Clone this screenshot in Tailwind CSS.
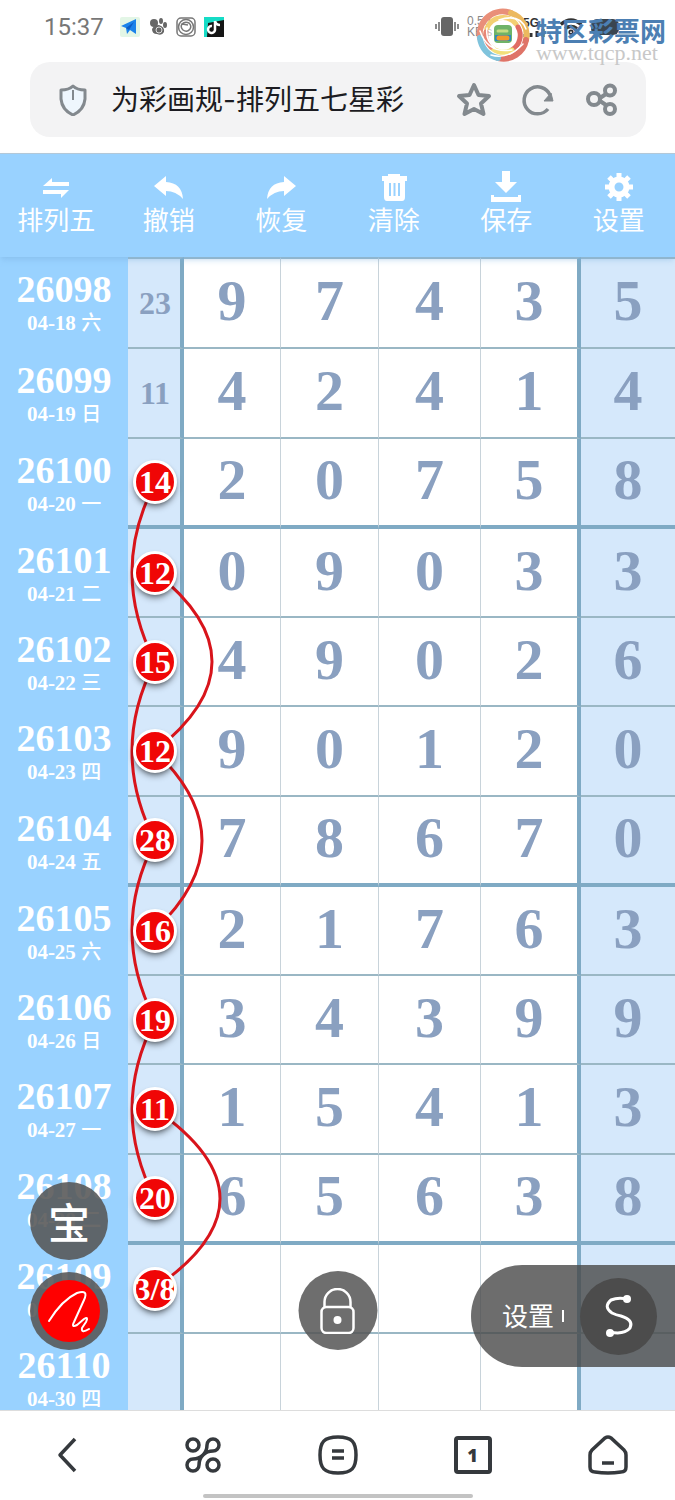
<!DOCTYPE html>
<html lang="zh-CN">
<head>
    <meta charset="UTF-8">
    <meta name="viewport" content="width=device-width, initial-scale=1.0">
    <title>为彩画规-排列五七星彩</title>
    <script src="https://cdn.jsdelivr.net/npm/@tailwindcss/browser@4"></script>
</head>

<body class="bg-white h-screen flex flex-col overflow-hidden font-['Liberation_Sans','Noto_Sans_CJK_SC',sans-serif]">
    <header class="relative shrink-0">
        <!-- status bar -->
        <div class="h-[62px] pl-11 flex items-center text-[#777] pb-2">
            <span class="text-[24px] font-['Roboto',sans-serif]">15:37</span>
            <svg class="ml-4 size-5" viewBox="0 0 20 20"><rect width="20" height="20" rx="2" fill="#e3f6e6"/><path d="M1 9 16 2V17L10 13 7 17 6 11Z" fill="#1b83ea"/><path d="M6 11 14 5 9 13Z" fill="#0b5cc4"/></svg>
            <svg class="ml-2 size-5" viewBox="0 0 20 20" fill="#666"><circle cx="6" cy="6" r="4"/><ellipse cx="13" cy="4" rx="2" ry="3"/><ellipse cx="17" cy="8" rx="2" ry="3"/><path d="M4 12Q6 8 11 8Q17 10 16 15Q14 19 9 17Q4 17 4 12"/><circle cx="11" cy="13" r="3" fill="none" stroke="#ddd"/></svg>
            <svg class="ml-2 size-5" viewBox="0 0 20 20" fill="none" stroke="#777"><rect x="1" y="1" width="18" height="18" rx="4" stroke-width="1.500"/><circle cx="10" cy="10" r="7.500" stroke-width="1.500"/><path d="M6 7Q9 4 13 6Q16 9 14 12Q11 16 7 13Q4 10 6 7L12 8" stroke-width="1.500"/></svg>
            <svg class="ml-2 size-5" viewBox="0 0 20 20"><path d="M0 0H20V20H0Z" fill="#16dcc6"/><path d="M4 6 20 3V20H3Z" fill="#151515"/><path d="M11 4V13A3.500 3.500 0 1 1 8 9M11 4Q12 8 16 8" fill="none" stroke="#fff" stroke-width="2.500"/></svg>

            <div class="ml-auto mr-14 flex items-center text-[#555]">
                <svg class="w-6 h-5" viewBox="0 0 24 20"><rect x="6" y="0" width="12" height="19" rx="3" fill="#666"/><path d="M1 7V12M4 5V14M20 5V14M23 7V12" stroke="#666" stroke-width="1.500"/></svg>
                <div class="ml-2 w-10 text-[12px] leading-[11px] text-[#888]">0.50<br>KB/s</div>
                <div class="w-8 ml-4 text-[12px] leading-[12px] font-bold text-[#333]">5G
                    <svg class="w-6 h-2" viewBox="0 0 24 8" fill="none" stroke="#333" stroke-width="3"><path d="M2 5V8M8 4V8M14 2V8M20 0V8"/></svg>
                </div>
                <svg class="w-6 h-5 ml-1" viewBox="0 0 28 20" fill="none" stroke="#333" stroke-width="4"><path d="M2 7Q14-3 26 7M7 12Q14 7 21 12"/><circle cx="14" cy="16" r="1"/></svg>
                <span class="ml-2 w-7 h-4 rounded-md bg-[#3a4550]"></span>
            </div>
        </div>

        <!-- watermark -->
        <div class="absolute right-[9px] top-2 flex items-center gap-[6px]">
            <svg class="size-[54px]" viewBox="-27 -27 54 54" fill="none" stroke-linecap="round" stroke-width="6">
                <circle r="17" fill="#fff" fill-opacity=".5"/>
                <path d="M-23 3A23 23 0 0 1 8-22" stroke="#e98f79"/>
                <path d="M8-22A23 23 0 0 1 23 5" stroke="#ecb95e"/>
                <path d="M23 5A23 23 0 0 1-5 23" stroke="#df7468"/>
                <path d="M-5 23A23 23 0 0 1-23 3" stroke="#7fc3dc"/>
                <path d="M-16-7A17 17 0 0 1 13-11" stroke="#f3cf72" stroke-width="5"/>
                <path d="M15-8A17 17 0 0 1 9 15" stroke="#e06b63" stroke-width="5"/>
                <path d="M9 15A17 17 0 0 1-12 12" stroke="#f2df7a" stroke-width="5"/>
                <path d="M-12 12A17 17 0 0 1-17-3" stroke="#e88676" stroke-width="5"/>
                <path d="M-23-4Q-15 19 9 15M23-6Q17-22-4-15M-16-7Q-18 5-8 13M20 9Q5 25-12 20" stroke="#fff" stroke-width="1.500"/>
                <rect x="-9" y="-10" width="18" height="18" rx="4" fill="#6fb368"/>
                <path d="M-8 0H8V6H-8Z" fill="#3188bd"/>
                <path d="M-4 3H4" stroke="#f29a2c" stroke-width="5"/>
                <path d="M-5-4H4" stroke="#c6dd82" stroke-width="3"/>
            </svg>
            <div class="pt-2">
                <div class="text-[26px] leading-[28px] font-bold text-[#4c7fb3] font-['Noto_Sans_CJK_SC',sans-serif]">特区彩票网</div>
                <div class="text-[22px] leading-[18px] text-[#c8c8c8] font-['Liberation_Serif',serif]">www.tqcp.net</div>
            </div>
        </div>

        <!-- address bar -->
        <div class="ml-[30px] mr-[29px] h-[75px] rounded-[20px] bg-[#f3f3f4] flex items-center pl-[29px] pr-[26px] text-[#83898e]">
            <svg class="w-7 h-8" viewBox="0 0 28 32" fill="#eef6fd" stroke="currentColor" stroke-width="3" stroke-linejoin="round"><path d="M14 2Q18 6 26 6V15Q25 26 14 31Q3 26 2 15V6Q10 6 14 2Z"/><path d="M14 6V16" stroke-width="2"/></svg>
            <h1 class="ml-6 text-[28px] text-[#1c1c22] whitespace-nowrap font-['Inter','Noto_Sans_CJK_SC',sans-serif]">为彩画规-排列五七星彩</h1>
            <div class="ml-auto flex gap-7">
                <button type="button" aria-label="收藏"><svg class="size-9" viewBox="0 0 36 36" fill="none" stroke="currentColor" stroke-width="4" stroke-linejoin="round"><path d="M18 3 22.500 13 33 14 25 21.500 27.500 32 18 27 8.500 32 11 21.500 3 14 13.500 13Z"/></svg></button>
                <button type="button" aria-label="刷新"><svg class="size-9" viewBox="0 0 36 36" fill="none" stroke="currentColor" stroke-width="3.500"><path d="M28 27A13.500 13.500 0 1 1 30 13"/><path d="M31 11 33 19H24Z" fill="currentColor" stroke-width="1"/></svg></button>
                <button type="button" aria-label="分享"><svg class="size-9" viewBox="0 0 36 36" fill="none" stroke="currentColor" stroke-width="4"><circle cx="10" cy="17" r="6"/><circle cx="26" cy="8.500" r="5"/><circle cx="26" cy="27" r="5"/><path d="M16 16 22 12M16 19 22 23"/></svg></button>
            </div>
        </div>
    </header>

    <nav class="relative z-20 mt-4 h-[104px] shrink-0 grid grid-cols-6 bg-[#99d2ff] border-t border-[#b3c8d8] text-white text-[26px] leading-8 font-['Noto_Sans_CJK_SC',sans-serif] shadow-md shadow-[#7fb5e0]/40">
        <button type="button" class="flex flex-col items-center pt-[14px]"><svg class="size-9 -mb-px" viewBox="0 0 36 36" fill="#fff"><path d="M5 18 14 10V14H31V18ZM5 22H31L23 30V26H5Z"/></svg>排列五</button>
        <button type="button" class="flex flex-col items-center pt-[14px]"><svg class="size-9 -mb-px" viewBox="0 0 36 36" fill="#fff"><path d="M3 18 15 8V14Q31 15 32 31Q25 23 15 23V28Z"/></svg>撤销</button>
        <button type="button" class="flex flex-col items-center pt-[14px]"><svg class="size-9 -mb-px" viewBox="0 0 36 36" fill="#fff"><path d="M33 18 21 8V14Q5 15 4 31Q11 23 21 23V28Z"/></svg>恢复</button>
        <button type="button" class="flex flex-col items-center pt-[14px]"><svg class="size-9 -mb-px" viewBox="0 0 36 36"><path d="M12 8V6H24V8H31V13H29V29Q29 33 26 33H11Q8 33 8 29V13H6V8Z" fill="#fff"/><path d="M14 15V28M18.500 15V28M23 15V28" stroke="#99d2ff" stroke-width="2"/></svg>清除</button>
        <button type="button" class="flex flex-col items-center pt-[14px]"><svg class="size-9 -mb-px" viewBox="0 0 36 36" fill="#fff"><path d="M14 3H22V14H29L18 25 7 14H14ZM3 27H6V29H30V27H33V34H3Z"/></svg>保存</button>
        <button type="button" class="flex flex-col items-center pt-[14px]"><svg class="size-9 -mb-px" viewBox="0 0 36 36" fill="none" stroke="#fff"><circle cx="18" cy="19" r="7.500" stroke-width="6"/><path d="M18 5V10M18 28V33M4 19H9M27 19H32M8 9 12 13M24 25 28 29M28 9 24 13M12 25 8 29" stroke-width="5"/></svg>设置</button>
    </nav>

    <main class="relative flex-1 min-h-0 overflow-hidden">
        <table class="w-full table-fixed border-separate border-spacing-0 text-center font-bold text-[#8aa0c0] font-['Liberation_Serif','Noto_Sans_CJK_SC',serif]">
            <colgroup>
                <col class="w-[128px]"><col class="w-[56px]"><col class="w-[97px]"><col class="w-[98px]"><col class="w-[102px]"><col class="w-[100px]"><col class="w-[94px]">
            </colgroup>
            <tbody id="filas"></tbody>
        </table>

        <!-- trend lines, drawn under the balls -->
        <svg class="absolute left-0 top-px w-[260px] h-[1150px] pointer-events-none" viewBox="0 0 260 1150" fill="none" stroke="#d8141b" stroke-width="3">
            <path d="M155 225Q109 314 155 404Q109 493 155 583Q109 672 155 762Q109 851 155 941"/>
            <path d="M155 314Q269 404 155 493Q249 583 155 672"/>
            <path d="M155 851Q285 941 155 1030"/>
        </svg>

        <!-- floating buttons -->
        <button type="button" class="absolute z-20 left-[30px] bottom-[150px] size-[78px] rounded-full bg-[#555]/88 text-white text-[42px] leading-none font-medium font-['Noto_Sans_CJK_SC',sans-serif]">宝</button>
        <button type="button" aria-label="画笔" class="absolute z-20 left-[30px] bottom-[60px] size-[78px] rounded-full bg-[#555]/88 flex items-center justify-center">
            <svg class="size-[62px]" viewBox="0 0 62 62" fill="none" stroke="#fff" stroke-width="2" stroke-linecap="round" stroke-linejoin="round"><circle cx="31" cy="31" r="31" fill="#f00" stroke="none"/><path d="M11 41Q24 20 39 13Q51 9 46 20L36 42Q33 48 39 45L46 39Q51 36 48 42L44 48Q43 54 51 49"/></svg>
        </button>
        <button type="button" aria-label="锁定" class="absolute z-20 left-1/2 -translate-x-1/2 bottom-[60px] size-[79px] rounded-full bg-[#555]/85 flex items-center justify-center">
            <svg class="w-[36px] h-[46px]" viewBox="0 0 36 46" fill="none" stroke="#fff" stroke-width="2.500"><rect x="2" y="19" width="32" height="26" rx="5"/><path d="M5 19V14A13 13 0 0 1 31 14V19"/><circle cx="18" cy="32" r="4" fill="#fff" stroke="none"/></svg>
        </button>
        <div class="absolute z-20 right-0 bottom-[43px] w-[204px] h-[102px] rounded-l-full bg-[#484848]/80 flex items-center justify-end gap-4 pr-[18px] text-white">
            <button type="button" class="text-[26px] font-['Noto_Sans_CJK_SC',sans-serif] whitespace-nowrap flex items-center gap-2 pb-1">设置<span class="w-[2px] h-3 mt-1 bg-white"></span></button>
            <button type="button" aria-label="曲线" class="size-[77px] rounded-full bg-[#4c4c4c] flex items-center justify-center">
                <svg class="w-[30px] h-[44px]" viewBox="0 0 30 44" fill="none" stroke="#fff" stroke-width="3"><path d="M23 5Q14 3 7 6Q-1 13 8 19Q12 21 17 22Q30 26 26 34Q20 41 6 38"/><circle cx="23" cy="5" r="4" fill="#fff" stroke="none"/><circle cx="6" cy="39" r="4" fill="#fff" stroke="none"/></svg>
            </button>
        </div>
    </main>

    <footer class="relative z-20 shrink-0 h-[90px] bg-white border-t border-[#ddd] text-[#35393d]">
        <div class="h-[88px] grid grid-cols-5 place-items-center">
            <button type="button" aria-label="后退"><svg class="size-10" viewBox="0 0 40 40" fill="none" stroke="currentColor" stroke-width="3.500" stroke-linejoin="round"><path d="M27 4 12 20 27 36"/></svg></button>
            <button type="button" aria-label="工具"><svg class="size-10" viewBox="0 0 40 40" fill="none" stroke="currentColor" stroke-width="3.500"><circle cx="10" cy="10" r="6"/><circle cx="30" cy="30" r="6"/><path d="M24 10A6 6 0 1 1 30 16C25 16 23 17 20 20C17 23 16 25 16 30A6 6 0 1 1 10 24C15 24 17 23 20 20C23 17 24 15 24 10Z"/></svg></button>
            <button type="button" aria-label="菜单"><svg class="size-10" viewBox="0 0 40 40" fill="none" stroke="currentColor" stroke-width="3.500"><path d="M20 2C34 2 38 7 38 20S34 38 20 38 2 33 2 20 6 2 20 2ZM14 16H26M14 23H26"/></svg></button>
            <button type="button" aria-label="标签页" class="size-[38px] border-4 border-[#35393d] rounded-sm text-[18px] leading-none font-black font-['Open_Sans',sans-serif]">1</button>
            <button type="button" aria-label="主页"><svg class="size-10" viewBox="0 0 40 40" fill="none" stroke="currentColor" stroke-width="3.500"><path d="M17 3Q20 1 23 3L36 15Q38 17 38 20V32Q38 37 33 37Q20 39 7 37Q2 37 2 32V20Q2 17 4 15ZM14 28H26"/></svg></button>
        </div>
        <div class="absolute bottom-[2px] left-[30%] right-[30%] h-1 rounded-full bg-[#c3c3c3]"></div>
    </footer>

<script>
    const filas = [
        ['26098', '04-18', '六', '23', '97435'],
        ['26099', '04-19', '日', '11', '42414'],
        ['26100', '04-20', '一', '14', '20758'],
        ['26101', '04-21', '二', '12', '09033'],
        ['26102', '04-22', '三', '15', '49026'],
        ['26103', '04-23', '四', '12', '90120'],
        ['26104', '04-24', '五', '28', '78670'],
        ['26105', '04-25', '六', '16', '21763'],
        ['26106', '04-26', '日', '19', '34399'],
        ['26107', '04-27', '一', '11', '15413'],
        ['26108', '04-28', '二', '20', '65638'],
        ['26109', '04-29', '三', '3/8', '     '],
        ['26110', '04-30', '四', '', '     ']
    ];

    let html = '';
    filas.forEach((fila, i) => {
        // a thick rule closes every fourth draw
        let borde = i % 4 === 2 ? 'border-b-4 border-b-[#7faac4]' : 'border-b-2 border-b-[#9ab7c4]';
        if (i === 0) borde += ' border-t-2 border-t-[#9ab7c4]';
        const alto = i % 4 === 1 || i % 4 === 2 ? 'h-[90px]' : i === 0 ? 'h-[92px]' : 'h-[89px]';
        const bola = i > 1 && fila[3];

        html += `<tr class="${alto}">
            <td class="p-0 pt-1 bg-[#99d2ff] text-white"><div class="text-[38px] leading-9">${fila[0]}</div><div class="text-[21px] leading-8">${fila[1]} <span class="text-[20px] font-medium">${fila[2]}</span></div></td>
            <td class="p-0 bg-[#d5e8fb] border-r-4 border-r-[#7faac4] ${borde}">
                <div class="${bola ? 'relative z-10 ml-[5px] size-[44px] rounded-full border-[3px] border-white bg-[#f00606] shadow-md shadow-black/40 text-white' : 'pl-[2px]'} flex items-center justify-center text-[32px] leading-none">${fila[3]}</div>
            </td>`;
        fila[4].split('').forEach((n, j) => {
            const lado = j === 3 ? 'border-r-4 border-r-[#7faac4] bg-white' : j === 4 ? 'bg-[#d5e8fb]' : 'border-r border-r-[#c8d3da] bg-white';
            html += `<td class="p-0 pb-1 ${lado} ${borde} text-[58px] leading-none">${n}</td>`;
        });
        html += '</tr>';
    });
    document.getElementById('filas').innerHTML = html;
</script>
</body>
</html>
